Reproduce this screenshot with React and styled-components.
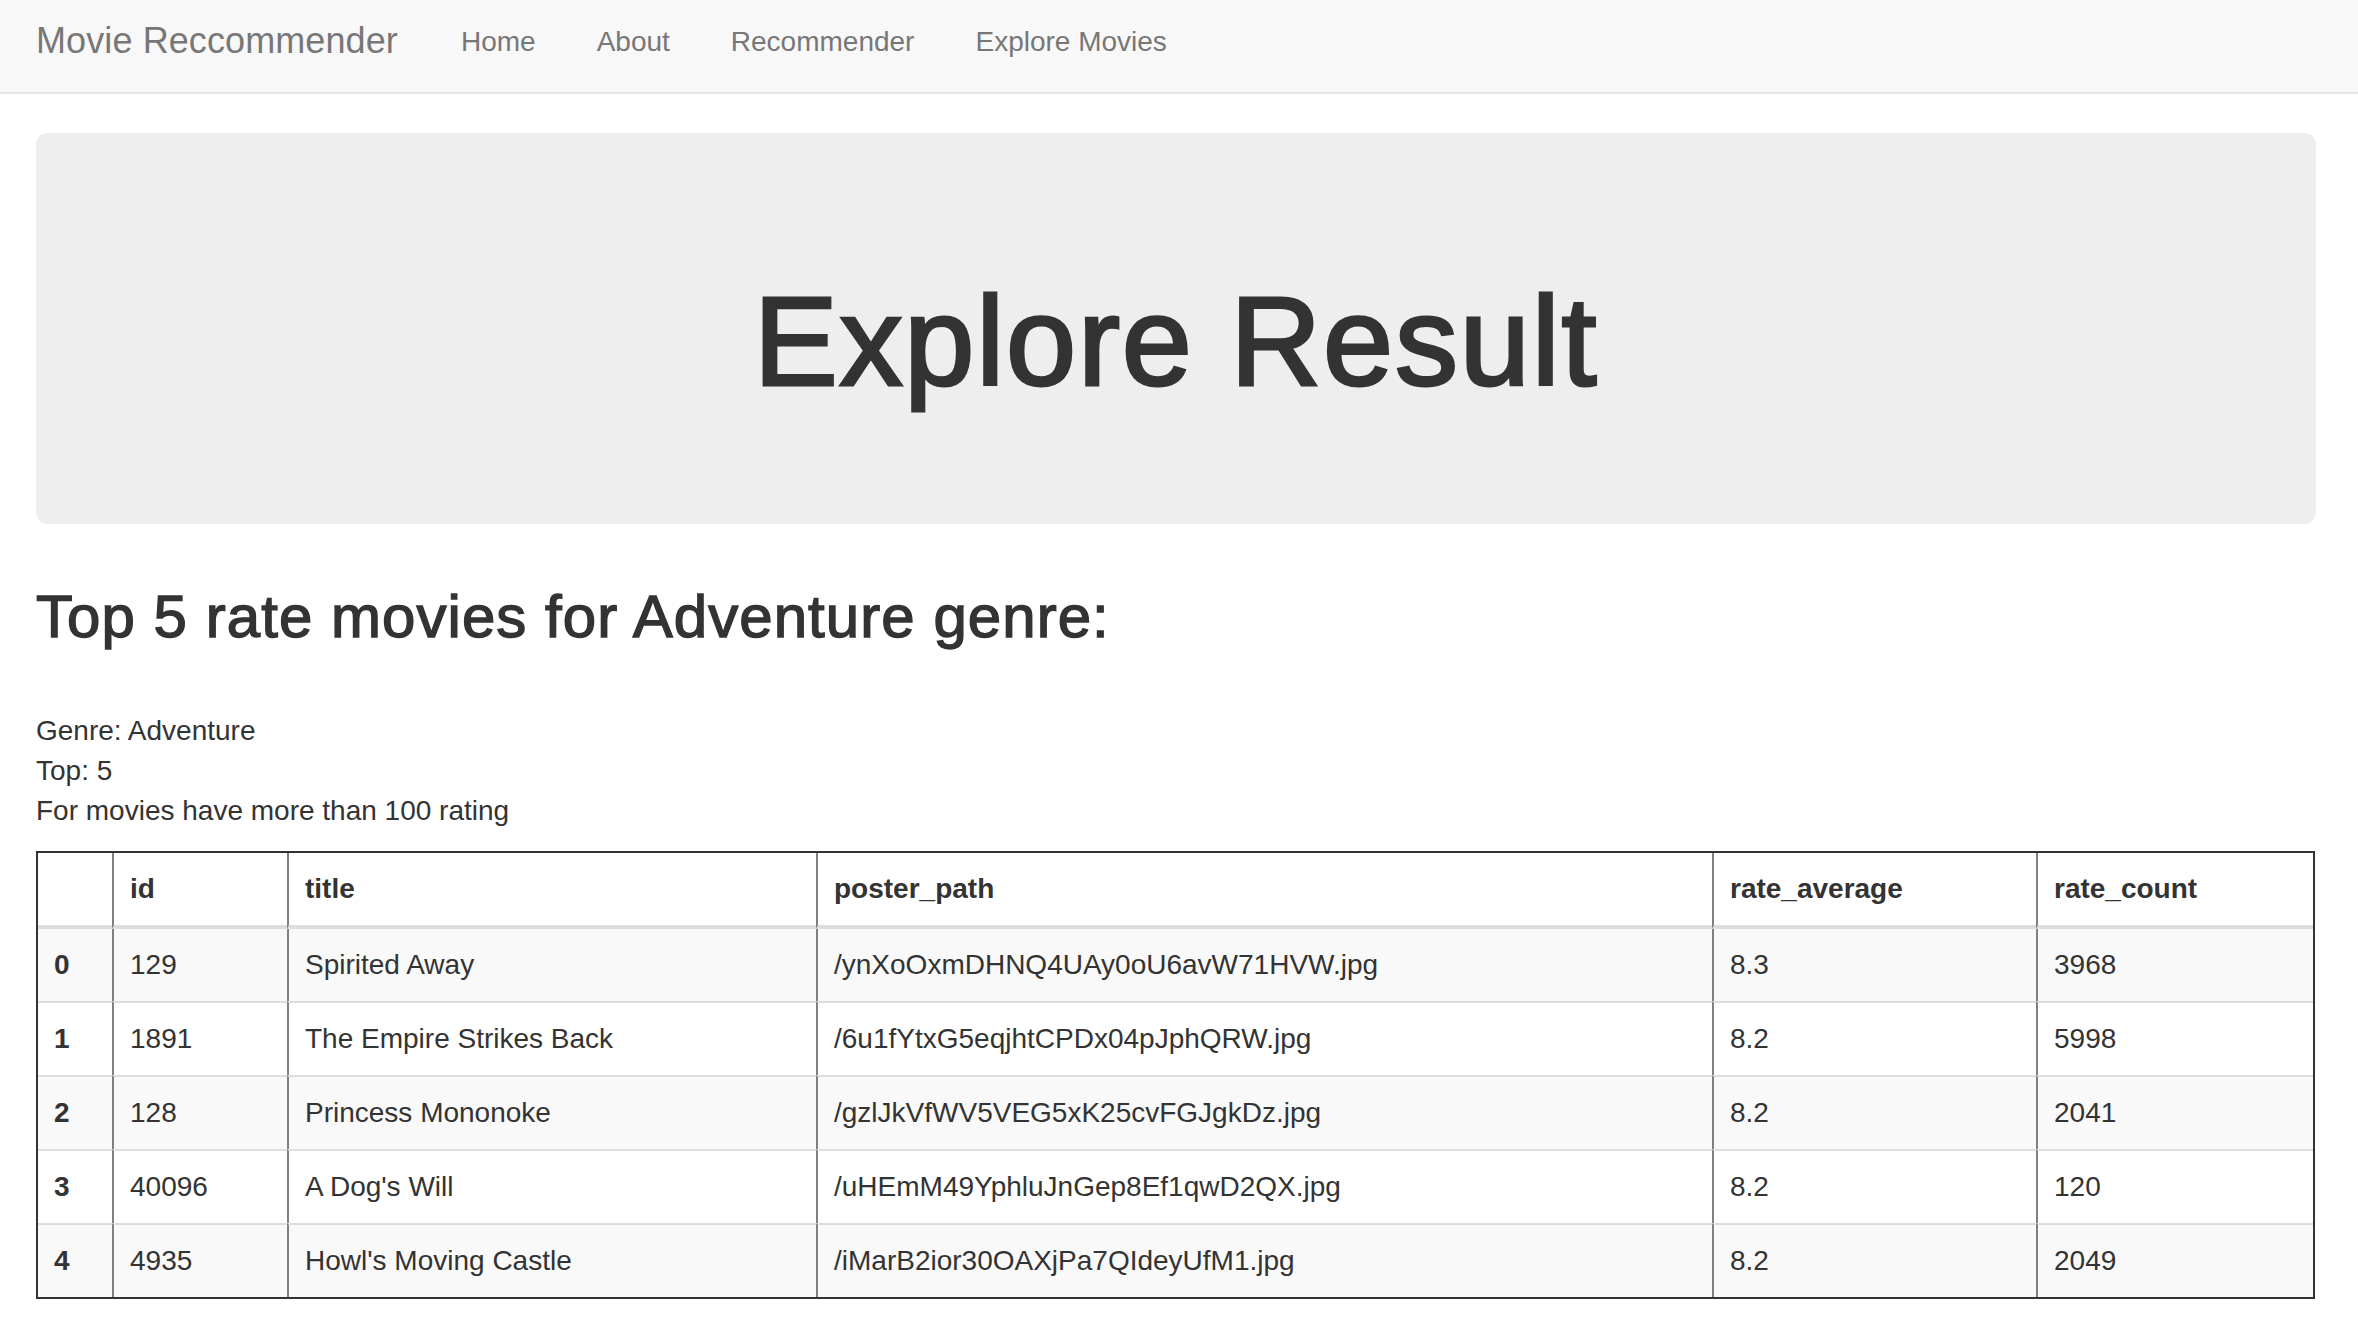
import React from "react";
import styled, { createGlobalStyle } from "styled-components";

const GlobalStyle = createGlobalStyle`
  html, body {
    margin: 0;
    padding: 0;
    background: #ffffff;
  }
  body {
    font-family: "Liberation Sans", Arial, Helvetica, sans-serif;
    color: #333333;
    font-size: 28px;
    line-height: 40px;
  }
  * { box-sizing: border-box; }
`;

const Navbar = styled.nav`
  height: 94px;
  background: #f8f8f8;
  border-bottom: 2px solid #e7e7e7;
  display: flex;
  align-items: flex-start;
  padding: 0 36px;
`;

const Brand = styled.a`
  font-size: 36px;
  line-height: 40px;
  padding: 21px 33px 0 0;
  color: #777777;
  text-decoration: none;
  white-space: nowrap;
  letter-spacing: 0.1px;
`;

const NavList = styled.ul`
  display: flex;
  list-style: none;
  margin: 0;
  padding: 0;
`;

const NavLink = styled.a`
  display: block;
  font-size: 28px;
  line-height: 40px;
  padding: 22px 31px 0 30px;
  color: #777777;
  text-decoration: none;
  white-space: nowrap;
`;

const Main = styled.main`
  padding: 39px 42px 40px 36px;
`;

const Jumbotron = styled.section`
  background: #eeeeee;
  border-radius: 12px;
  padding: 96px 60px;
  text-align: center;
`;

const HeroTitle = styled.h1`
  margin: 44px 0 16px;
  font-size: 126px;
  line-height: 1.1;
  font-weight: 500;
  letter-spacing: 1.8px;
  color: #333333;
  -webkit-text-stroke: 3px #333333;
`;

const SectionTitle = styled.h2`
  margin: 60px 0 61px;
  font-size: 60px;
  line-height: 66px;
  font-weight: 500;
  letter-spacing: 1.05px;
  color: #333333;
  -webkit-text-stroke: 1.4px #333333;
`;

const InfoLine = styled.div`
  font-size: 28px;
  line-height: 40px;
`;

const Table = styled.table`
  margin-top: 20px;
  width: 2279px;
  table-layout: fixed;
  border-collapse: separate;
  border-spacing: 0;
  border: 2px solid #333333;
  font-size: 28px;
  line-height: 40px;
`;

const HeadCell = styled.th`
  width: ${(p) => p.$w}px;
  padding: 16px;
  text-align: left;
  vertical-align: bottom;
  font-weight: bold;
  border-bottom: 4px solid #dddddd;
  &:not(:first-child) {
    border-left: 2px solid #808080;
  }
`;

const BodyRow = styled.tr`
  background: ${(p) => (p.$striped ? "#f9f9f9" : "#ffffff")};
  &:not(:first-child) > * {
    border-top: 2px solid #dddddd;
  }
`;

const IndexCell = styled.th`
  padding: 16px;
  text-align: left;
  vertical-align: top;
  font-weight: bold;
`;

const DataCell = styled.td`
  padding: 16px;
  vertical-align: top;
  border-left: 2px solid #808080;
  white-space: nowrap;
`;

const columns = [
  { key: "", w: 74 },
  { key: "id", w: 175 },
  { key: "title", w: 529 },
  { key: "poster_path", w: 896 },
  { key: "rate_average", w: 324 },
  { key: "rate_count", w: 277 },
];

const rows = [
  ["129", "Spirited Away", "/ynXoOxmDHNQ4UAy0oU6avW71HVW.jpg", "8.3", "3968"],
  ["1891", "The Empire Strikes Back", "/6u1fYtxG5eqjhtCPDx04pJphQRW.jpg", "8.2", "5998"],
  ["128", "Princess Mononoke", "/gzlJkVfWV5VEG5xK25cvFGJgkDz.jpg", "8.2", "2041"],
  ["40096", "A Dog's Will", "/uHEmM49YphluJnGep8Ef1qwD2QX.jpg", "8.2", "120"],
  ["4935", "Howl's Moving Castle", "/iMarB2ior30OAXjPa7QIdeyUfM1.jpg", "8.2", "2049"],
];

export default function App() {
  return (
    <>
      <GlobalStyle />
      <Navbar>
        <Brand href="#">Movie Reccommender</Brand>
        <NavList>
          <li><NavLink href="#">Home</NavLink></li>
          <li><NavLink href="#">About</NavLink></li>
          <li><NavLink href="#">Recommender</NavLink></li>
          <li><NavLink href="#">Explore Movies</NavLink></li>
        </NavList>
      </Navbar>
      <Main>
        <Jumbotron>
          <HeroTitle>Explore Result</HeroTitle>
        </Jumbotron>
        <SectionTitle>Top 5 rate movies for Adventure genre:</SectionTitle>
        <InfoLine>Genre: Adventure</InfoLine>
        <InfoLine>Top: 5</InfoLine>
        <InfoLine>For movies have more than 100 rating</InfoLine>
        <Table>
          <thead>
            <tr>
              {columns.map((c) => (
                <HeadCell key={c.key || "idx"} $w={c.w}>{c.key}</HeadCell>
              ))}
            </tr>
          </thead>
          <tbody>
            {rows.map((r, i) => (
              <BodyRow key={i} $striped={i % 2 === 0}>
                <IndexCell>{i}</IndexCell>
                {r.map((v, j) => (
                  <DataCell key={j}>{v}</DataCell>
                ))}
              </BodyRow>
            ))}
          </tbody>
        </Table>
      </Main>
    </>
  );
}
